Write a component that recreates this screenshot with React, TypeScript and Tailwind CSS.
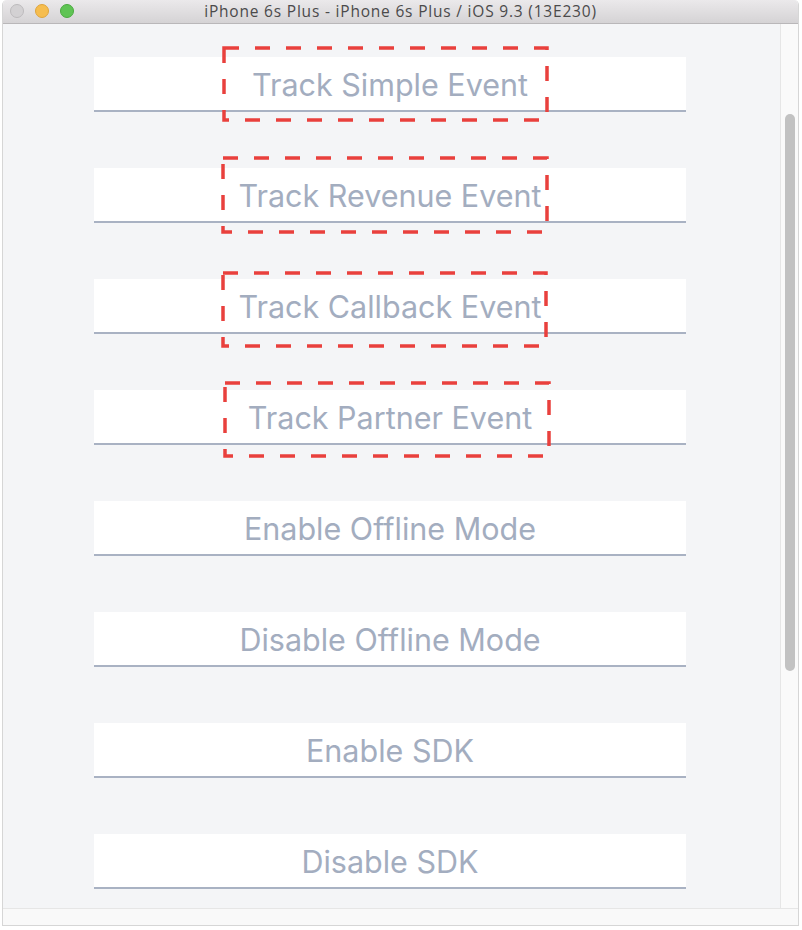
import React from "react";

const buttons = [
  "Track Simple Event",
  "Track Revenue Event",
  "Track Callback Event",
  "Track Partner Event",
  "Enable Offline Mode",
  "Disable Offline Mode",
  "Enable SDK",
  "Disable SDK",
];

const boxes: ({ left: number; top: number; width: number; height: number } | null)[] = [
  { left: 129.5, top: -9, width: 323, height: 72 },
  { left: 129, top: -10, width: 324, height: 74 },
  { left: 129, top: -6, width: 323, height: 73 },
  { left: 130.5, top: -7, width: 324, height: 73 },
  null,
  null,
  null,
  null,
];

function DashedBox({ box }: { box: { left: number; top: number; width: number; height: number } }) {
  const pad = 3;
  return (
    <svg
      className="absolute pointer-events-none"
      style={{
        left: box.left - pad,
        top: box.top - pad,
        width: box.width + pad * 2,
        height: box.height + pad * 2,
      }}
      viewBox={`0 0 ${box.width + pad * 2} ${box.height + pad * 2}`}
    >
      <rect
        x={pad}
        y={pad}
        width={box.width}
        height={box.height}
        fill="none"
        stroke="#e9403d"
        strokeWidth={3.5}
        strokeDasharray="15 16"
      />
    </svg>
  );
}

export default function App() {
  return (
    <div className="w-[802px] h-[930px] bg-white overflow-hidden">
      <div className="ml-[2px] w-[797px] h-[926px] flex flex-col rounded-t-[5px] overflow-hidden border border-[#d6d6d6] border-t-0">
        {/* Title bar */}
        <div className="relative h-[24px] shrink-0 bg-gradient-to-b from-[#ebe9eb] to-[#d5d3d5] border-b border-[#b9b7b9] flex items-center justify-center">
          <div className="absolute left-[7px] top-[4px] flex gap-[11px]">
            <div className="w-[14px] h-[14px] rounded-full bg-[#d3d1d3] border border-[#bcbabc]" />
            <div className="w-[14px] h-[14px] rounded-full bg-[#f6bd4f] border border-[#dea43c]" />
            <div className="w-[14px] h-[14px] rounded-full bg-[#5fc454] border border-[#4aa93f]" />
          </div>
          <span
            className="text-[15.5px] tracking-[0.8px] text-[#4b4a4b] leading-none"
            style={{ fontFamily: '"Open Sans", "Liberation Sans", Arial, sans-serif' }}
          >
            iPhone 6s Plus - iPhone 6s Plus / iOS 9.3 (13E230)
          </span>
        </div>
        {/* Body */}
        <div className="flex h-[884px] shrink-0">
          <div className="flex-1 bg-[#f4f5f7] pl-[91px] pt-[33px] flex flex-col gap-[56px]">
            {buttons.map((label, i) => (
              <div key={label} className="relative w-[592px]">
                <div
                  className="h-[55px] bg-white border-b-2 border-[#a9b2c3] flex items-center justify-center text-[30.5px] text-[#a3adbf] pt-[2px]"
                  style={{ fontFamily: 'Inter, "Open Sans", sans-serif' }}
                >
                  {label}
                </div>
                {boxes[i] && <DashedBox box={boxes[i]!} />}
              </div>
            ))}
          </div>
          <div className="w-[18px] bg-[#fafafa] border-l border-[#e6e6e6] pt-[90px] pl-[4px]">
            <div className="w-[10px] h-[557px] rounded-full bg-[#c2c2c2]" />
          </div>
        </div>
        {/* Bottom strip */}
        <div className="flex-1 bg-[#f9f9f9] border-t border-[#e6e6e6]" />
      </div>
    </div>
  );
}
